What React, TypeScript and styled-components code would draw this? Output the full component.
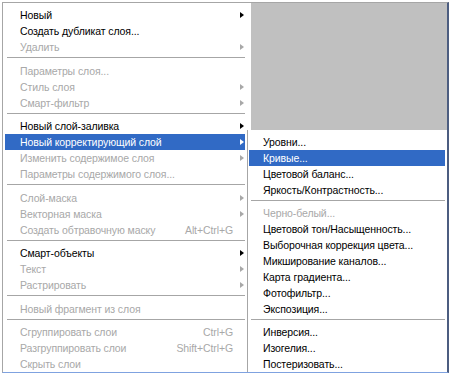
import React from "react";
import styled, { createGlobalStyle } from "styled-components";

type Entry = {
  label?: string;
  disabled?: boolean;
  arrow?: boolean;
  shortcut?: string;
  active?: boolean;
  sep?: boolean;
};

const SEP: Entry = { sep: true };

const layerMenu: Entry[] = [
  { label: "Новый", arrow: true },
  { label: "Создать дубликат слоя..." },
  { label: "Удалить", disabled: true, arrow: true },
  SEP,
  { label: "Параметры слоя...", disabled: true },
  { label: "Стиль слоя", disabled: true, arrow: true },
  { label: "Смарт-фильтр", disabled: true, arrow: true },
  SEP,
  { label: "Новый слой-заливка", arrow: true },
  { label: "Новый корректирующий слой", arrow: true, active: true },
  { label: "Изменить содержимое слоя", disabled: true, arrow: true },
  { label: "Параметры содержимого слоя...", disabled: true },
  SEP,
  { label: "Слой-маска", disabled: true, arrow: true },
  { label: "Векторная маска", disabled: true, arrow: true },
  { label: "Создать обтравочную маску", disabled: true, shortcut: "Alt+Ctrl+G" },
  SEP,
  { label: "Смарт-объекты", arrow: true },
  { label: "Текст", disabled: true, arrow: true },
  { label: "Растрировать", disabled: true, arrow: true },
  SEP,
  { label: "Новый фрагмент из слоя", disabled: true },
  SEP,
  { label: "Сгруппировать слои", disabled: true, shortcut: "Ctrl+G" },
  { label: "Разгруппировать слои", disabled: true, shortcut: "Shift+Ctrl+G" },
  { label: "Скрыть слои", disabled: true },
];

const adjustMenu: Entry[] = [
  { label: "Уровни..." },
  { label: "Кривые...", active: true },
  { label: "Цветовой баланс..." },
  { label: "Яркость/Контрастность..." },
  SEP,
  { label: "Черно-белый...", disabled: true },
  { label: "Цветовой тон/Насыщенность..." },
  { label: "Выборочная коррекция цвета..." },
  { label: "Микширование каналов..." },
  { label: "Карта градиента..." },
  { label: "Фотофильтр..." },
  { label: "Экспозиция..." },
  SEP,
  { label: "Инверсия..." },
  { label: "Изогелия..." },
  { label: "Постеризовать..." },
];

const GlobalStyle = createGlobalStyle`
  body {
    margin: 0;
    background: #ffffff;
    font-family: "Liberation Sans", Tahoma, Arial, sans-serif;
    font-size: 10.5px;
    letter-spacing: -0.1px;
  }
`;

const tone = (active?: boolean, disabled?: boolean) =>
  active ? "#ffffff" : disabled ? "#a8a8a8" : "#000000";

const MenuItem: React.FC<{ entry: Entry; indent: number; sepHeight: number }> = ({
  entry,
  indent,
  sepHeight,
}) => {
  if (entry.sep) return <Separator $height={sepHeight} />;
  return (
    <Row $active={entry.active} $disabled={entry.disabled} $indent={indent}>
      <Label>{entry.label}</Label>
      {entry.shortcut ? <Shortcut>{entry.shortcut}</Shortcut> : null}
      {entry.arrow ? <Arrow $color={tone(entry.active, entry.disabled)} /> : null}
    </Row>
  );
};

const App: React.FC = () => {
  return (
    <>
      <GlobalStyle />
      <Frame>
        <LayerMenu>
          {layerMenu.map((entry, i) => (
            <MenuItem key={i} entry={entry} indent={15} sepHeight={7.5} />
          ))}
        </LayerMenu>
        <RightColumn>
          <Canvas />
          <SubMenu>
            {adjustMenu.map((entry, i) => (
              <MenuItem key={i} entry={entry} indent={14} sepHeight={7} />
            ))}
          </SubMenu>
        </RightColumn>
      </Frame>
    </>
  );
};

const Frame = styled.div`
  margin: 2px 0 0 2px;
  width: 444px;
  display: grid;
  grid-template-columns: 248px 1fr;
  border-top: 1px solid #a6a6a6;
  border-left: 1px solid #a6a6a6;
  border-right: 2px solid #4c5d80;
  border-bottom: 1px solid #7fa2e0;
  background: #ffffff;
`;

const LayerMenu = styled.div`
  padding: 4px 6px 0 2px;
  display: flex;
  flex-direction: column;
`;

const RightColumn = styled.div`
  display: flex;
  flex-direction: column;
`;

const Canvas = styled.div`
  height: 127px;
  background: #c0c0c0;
`;

const SubMenu = styled.div`
  flex: 1;
  margin-left: -4px;
  padding: 4px 2px 0 1px;
  border-left: 1px solid #a6a6a6;
  background: #ffffff;
  display: flex;
  flex-direction: column;
`;

const Row = styled.div<{ $active?: boolean; $disabled?: boolean; $indent: number }>`
  height: 16px;
  line-height: 16px;
  display: flex;
  align-items: center;
  padding-left: ${({ $indent }) => $indent}px;
  padding-right: 1px;
  white-space: nowrap;
  color: ${({ $active, $disabled }) => tone($active, $disabled)};
  background: ${({ $active }) => ($active ? "#316ac5" : "transparent")};
`;

const Label = styled.span`
  flex: 1;
`;

const Shortcut = styled.span`
  margin-right: 11px;
`;

const Arrow = styled.span<{ $color: string }>`
  width: 0;
  height: 0;
  border-left: 4px solid ${({ $color }) => $color};
  border-top: 3.5px solid transparent;
  border-bottom: 3.5px solid transparent;
`;

const Separator = styled.div<{ $height: number }>`
  height: ${({ $height }) => $height}px;
  box-sizing: border-box;
  padding-top: 2px;

  &::after {
    content: "";
    display: block;
    height: 1px;
    margin-left: 2px;
    background: #a6a6a6;
  }
`;

export default App;
